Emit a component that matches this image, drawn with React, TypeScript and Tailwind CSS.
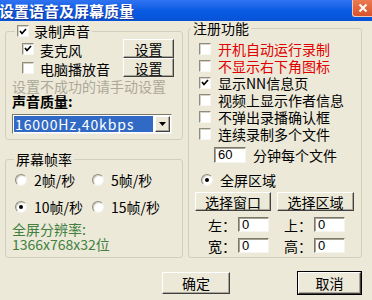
import React from 'react';

function Box({ on }: { on?: boolean }) {
  return (
    <span className="flex h-[12px] w-[12px] shrink-0 items-center justify-center border border-t-[#8f8c7e] border-l-[#8f8c7e] border-r-[#f7f6f1] border-b-[#f7f6f1] bg-white shadow-[inset_1px_1px_0_#d6d3c6]">
      {on && (
        <svg width="8" height="7" viewBox="0 0 8 7">
          <path d="M1 3 L3 5.5 L7 1" fill="none" stroke="#000" strokeWidth="1.7" />
        </svg>
      )}
    </span>
  );
}

function Radio({ on }: { on?: boolean }) {
  return (
    <span className="flex h-[12px] w-[12px] shrink-0 items-center justify-center rounded-full border border-t-[#8f8c7e] border-l-[#8f8c7e] border-r-[#f4f3ee] border-b-[#f4f3ee] bg-white shadow-[inset_1px_1px_1px_#cfccbf]">
      {on && <span className="h-[4px] w-[4px] rounded-full bg-black" />}
    </span>
  );
}

function Btn({ children, className = '' }: { children: React.ReactNode; className?: string }) {
  return (
    <div
      className={`flex items-center justify-center border border-t-white border-l-white border-r-[#404040] border-b-[#404040] bg-[#ECE9D8] shadow-[inset_-1px_-1px_0_#aca899] ${className}`}
    >
      {children}
    </div>
  );
}

function Field({ value, className = '' }: { value: string; className?: string }) {
  return (
    <div
      className={`flex items-center border border-t-[#7a7868] border-l-[#7a7868] border-r-[#f5f4ef] border-b-[#f5f4ef] bg-white pl-[3px] font-['Liberation_Sans',sans-serif] text-[13px] shadow-[inset_1px_1px_0_#a6a393] ${className}`}
    >
      {value}
    </div>
  );
}

export default function App() {
  return (
    <div className="h-[300px] w-[372px] overflow-hidden bg-[#ECE9D8] font-['Noto_Sans_CJK_SC',sans-serif] text-[14px] leading-[14px] text-black">
      {/* title bar */}
      <div className="flex h-[21px] justify-between bg-gradient-to-b from-[#2f73f2] via-[#0a5be2] to-[#0753d8]">
        <span className="ml-[-1px] mt-[3px] text-[15px] font-bold leading-[15px] text-white [text-shadow:1px_1px_0_#1a3a9a]">
          设置语音及屏幕质量
        </span>
        <div className="flex h-[17px] w-[20px] items-center justify-center rounded-bl-[3px] border-b border-l border-[#f3c7b6] bg-gradient-to-b from-[#ec7a52] to-[#d9522a]">
          <svg width="10" height="10" viewBox="0 0 10 10">
            <path d="M1.5 1.5 L8.5 8.5 M8.5 1.5 L1.5 8.5" stroke="#fff" strokeWidth="2" />
          </svg>
        </div>
      </div>

      <div className="flex gap-[5px] pl-[5px]">
        {/* left column */}
        <div className="flex w-[178px] flex-col">
          <fieldset className="mt-[3px] h-[116px] rounded-[3px] border border-[#D0D0BF] p-0">
            <legend className="ml-[9px] px-[2px]">
              <span className="flex h-[14px] items-center gap-[5px]">
                <Box on />
                <span>录制声音</span>
              </span>
            </legend>
            <div className="flex flex-col pl-[6px] pr-[8px]">
              <div className="mt-[1px] flex h-[19px] items-center">
                <span className="ml-[10px]"><Box on /></span>
                <span className="ml-[6px] mt-[2px]">麦克风</span>
                <Btn className="ml-auto h-[19px] w-[51px]">设置</Btn>
              </div>
              <div className="flex h-[19px] items-center">
                <span className="ml-[10px]"><Box /></span>
                <span className="ml-[6px] mt-[2px]">电脑播放音</span>
                <Btn className="ml-auto h-[19px] w-[51px]">设置</Btn>
              </div>
              <div className="mt-[2px] text-[#ACA899]">设置不成功的请手动设置</div>
              <div className="mt-[1px] font-bold">声音质量:</div>
              <div className="mt-[6px] flex h-[20px] w-[160px] items-stretch border border-t-[#7a7868] border-l-[#7a7868] border-r-[#f5f4ef] border-b-[#f5f4ef] bg-white p-[1px]">
                <div className="flex flex-1 items-center bg-[#316AC5] pl-[1px] tracking-[0.9px] text-white">16000Hz,40kbps</div>
                <Btn className="ml-[2px] w-[15px]">
                  <svg width="7" height="4" viewBox="0 0 7 4">
                    <path d="M0 0 H7 L3.5 4 Z" fill="#000" />
                  </svg>
                </Btn>
              </div>
            </div>
          </fieldset>

          <fieldset className="mt-[12px] h-[106px] rounded-[3px] border border-[#D0D0BF] p-0">
            <legend className="ml-[8px] px-[2px]">屏幕帧率</legend>
            <div className="flex flex-col pl-[6px]">
              <div className="mt-[7px] grid grid-cols-[77px_1fr] gap-y-[13px] pl-[3px]">
                <span className="flex h-[14px] items-center gap-[7px]"><Radio />2帧/秒</span>
                <span className="flex h-[14px] items-center gap-[7px]"><Radio />5帧/秒</span>
                <span className="flex h-[14px] items-center gap-[7px]"><Radio on />10帧/秒</span>
                <span className="flex h-[14px] items-center gap-[7px]"><Radio />15帧/秒</span>
              </div>
              <div className="mt-[8px] leading-[15px] text-[#408040]">
                <div>全屏分辨率:</div>
                <div>1366x768x32位</div>
              </div>
            </div>
          </fieldset>
        </div>

        {/* right column */}
        <fieldset className="h-[237px] w-[174px] rounded-[3px] border border-[#D0D0BF] p-0">
          <legend className="ml-[2px] px-[2px]">注册功能</legend>
          <div className="flex flex-col">
            <div className="mt-[5px] flex flex-col pl-[10px]">
              <div className="flex h-[17px] items-center gap-[7px] text-[#e00000]"><Box />开机自动运行录制</div>
              <div className="flex h-[17px] items-center gap-[7px] text-[#e00000]"><Box />不显示右下角图标</div>
              <div className="flex h-[17px] items-center gap-[7px]"><Box on />显示NN信息页</div>
              <div className="flex h-[17px] items-center gap-[7px]"><Box />视频上显示作者信息</div>
              <div className="flex h-[17px] items-center gap-[7px]"><Box />不弹出录播确认框</div>
              <div className="flex h-[17px] items-center gap-[7px]"><Box />连续录制多个文件</div>
            </div>
            <div className="mt-[5px] flex items-center pl-[25px]">
              <Field value="60" className="h-[16px] w-[32px]" />
              <span className="ml-[7px]">分钟每个文件</span>
            </div>
            <div className="mt-[10px] flex h-[14px] items-center gap-[7px] pl-[12px]">
              <Radio on />
              全屏区域
            </div>
            <div className="mt-[5px] flex gap-[6px] pl-[6px]">
              <Btn className="h-[19px] w-[76px]">选择窗口</Btn>
              <Btn className="h-[19px] w-[77px]">选择区域</Btn>
            </div>
            <div className="mt-[6px] flex flex-col gap-[6px] pl-[19px]">
              <div className="flex items-center">
                <span className="w-[28px]">左：</span>
                <Field value="0" className="ml-[2px] h-[15px] w-[31px]" />
                <span className="ml-[15px] w-[28px]">上：</span>
                <Field value="0" className="ml-[2px] h-[15px] w-[31px]" />
              </div>
              <div className="flex items-center">
                <span className="w-[28px]">宽：</span>
                <Field value="0" className="ml-[2px] h-[15px] w-[31px]" />
                <span className="ml-[15px] w-[28px]">高：</span>
                <Field value="0" className="ml-[2px] h-[15px] w-[31px]" />
              </div>
            </div>
          </div>
        </fieldset>
      </div>

      {/* bottom buttons */}
      <div className="mt-[13px] flex items-start">
        <Btn className="ml-[162px] mt-[1px] h-[22px] w-[68px]">确定</Btn>
        <div className="ml-[67px] h-[24px] w-[65px] border border-black">
          <Btn className="h-full w-full">取消</Btn>
        </div>
      </div>
    </div>
  );
}
